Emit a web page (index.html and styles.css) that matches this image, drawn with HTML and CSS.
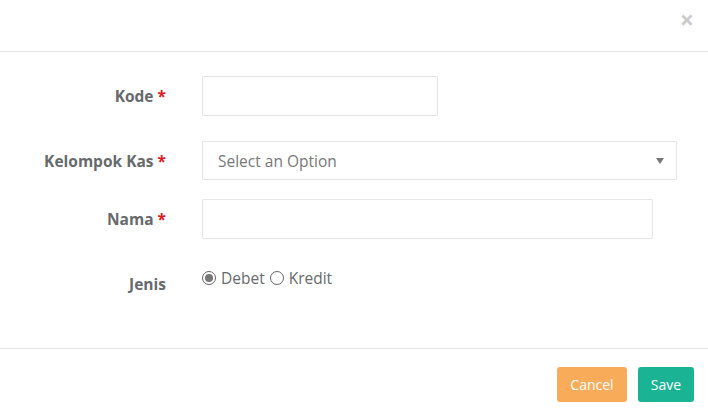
FILE: index.html
```html
<!DOCTYPE html>
<html>
<head>
<meta charset="utf-8">
<link rel="stylesheet" href="styles.css">
</head>
<body>
<div class="modal">
  <div class="modal-header">
    <button class="close" type="button">×</button>
  </div>
  <div class="modal-body">
    <div class="row row-kode">
      <label class="lbl">Kode <span class="req">*</span></label>
      <div class="ctl"><div class="input w-kode"></div></div>
    </div>
    <div class="row row-kel">
      <label class="lbl">Kelompok Kas <span class="req">*</span></label>
      <div class="ctl">
        <div class="input select w-kel">
          <span class="placeholder">Select an Option</span>
          <span class="caret"></span>
        </div>
      </div>
    </div>
    <div class="row row-nama">
      <label class="lbl">Nama <span class="req">*</span></label>
      <div class="ctl"><div class="input w-nama"></div></div>
    </div>
    <div class="row row-jenis">
      <label class="lbl lbl-jenis">Jenis</label>
      <div class="ctl radios">
        <span class="radio checked"></span><span class="rtext">Debet</span>
        <span class="radio"></span><span class="rtext">Kredit</span>
      </div>
    </div>
  </div>
  <div class="modal-footer">
    <button class="btn btn-warning" type="button">Cancel</button>
    <button class="btn btn-primary" type="button">Save</button>
  </div>
</div>
</body>
</html>
```
FILE: styles.css
```css
* { box-sizing: border-box; }
html, body { margin: 0; padding: 0; background: #fff; }
body {
  font-family: "Open Sans", "Noto Sans", sans-serif;
  color: #676a6c;
  width: 708px;
  height: 411px;
  overflow: hidden;
}
.modal { width: 708px; }
.modal-header {
  height: 52px;
  border-bottom: 1px solid #e5e5e5;
  display: flex;
  justify-content: flex-end;
  align-items: flex-start;
  padding: 4px 14px 0 0;
}
.close {
  border: 0;
  background: none;
  padding: 0;
  font-family: "Open Sans", sans-serif;
  font-size: 25px;
  font-weight: 700;
  line-height: 30px;
  color: #000;
  opacity: 0.2;
  cursor: pointer;
}
.modal-body {
  height: 297px;
  padding-top: 24px;
  border-bottom: 1px solid #e5e5e5;
}
.row {
  display: grid;
  grid-template-columns: 166px 1fr;
  column-gap: 36px;
  align-items: center;
}
.row-kode { margin-bottom: 25px; }
.row-kel { margin-bottom: 19px; }
.row-nama { margin-bottom: 29px; }
.lbl {
  text-align: right;
  font-size: 15.5px;
  font-weight: 700;
  color: #676a6c;
  white-space: nowrap;
}
.req { color: #e0191e; }
.input {
  height: 40px;
  border: 1px solid #e5e6e7;
  border-radius: 1px;
  background: #fff;
}
.w-kode { width: 236px; }
.w-kel { width: 475px; }
.w-nama { width: 451px; }
.select {
  display: flex;
  align-items: center;
  justify-content: space-between;
  padding: 0 12px 0 15px;
  height: 39px;
}
.placeholder {
  font-size: 15.5px;
  color: #777;
}
.caret {
  width: 0;
  height: 0;
  border-left: 4px solid transparent;
  border-right: 4px solid transparent;
  border-top: 6px solid #777;
}
.row-jenis { align-items: start; }
.lbl-jenis { padding-top: 5px; }
.radios {
  display: flex;
  align-items: center;
  font-size: 15.5px;
  color: #676a6c;
  height: 18px;
  padding-top: 1px;
}
.radio {
  width: 14px;
  height: 14px;
  border: 1px solid #666;
  border-radius: 50%;
  background: #fff;
  display: inline-flex;
  align-items: center;
  justify-content: center;
  margin-right: 5px;
}
.radio.checked::after {
  content: "";
  width: 8px;
  height: 8px;
  border-radius: 50%;
  background: #777;
}
.rtext { margin-right: 5px; line-height: 18px; }
.modal-footer {
  display: flex;
  justify-content: flex-end;
  gap: 11px;
  padding: 18px 14px 0 0;
}
.btn {
  height: 35px;
  border: 0;
  border-radius: 3px;
  color: #fff;
  font-family: "Open Sans", sans-serif;
  font-size: 14px;
  padding: 0 10px;
  cursor: pointer;
}
.btn-warning { background: #f8ac59; width: 70px; }
.btn-primary { background: #1ab394; width: 56px; }
```
